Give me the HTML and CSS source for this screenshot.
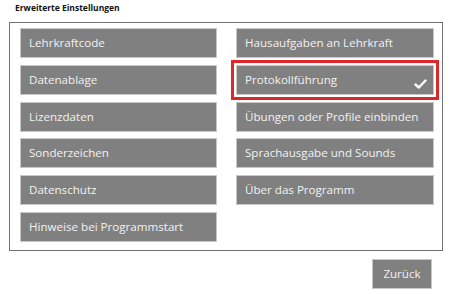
FILE: index.html
```html
<!DOCTYPE html>
<html lang="de">
<head>
    <meta charset="UTF-8">
    <title>Erweiterte Einstellungen</title>
    <link rel="stylesheet" href="styles.css">
</head>
<body>

<div class="settings-page">
    <h1 class="page-title">Erweiterte Einstellungen</h1>

    <div class="settings-panel">
        <button class="option-btn">Lehrkraftcode</button>
        <button class="option-btn">Hausaufgaben an Lehrkraft</button>
        <button class="option-btn">Datenablage</button>
        <button class="option-btn selected">Protokollführung
            <svg class="check" width="13" height="10" viewBox="0 0 13 10">
                <path d="M1.5 5.5 L4.8 8.5 L11.5 1.5" fill="none" stroke="#fff" stroke-width="2.4" stroke-linejoin="round" stroke-linecap="round"/>
            </svg>
        </button>
        <button class="option-btn">Lizenzdaten</button>
        <button class="option-btn">Übungen oder Profile einbinden</button>
        <button class="option-btn">Sonderzeichen</button>
        <button class="option-btn">Sprachausgabe und Sounds</button>
        <button class="option-btn">Datenschutz</button>
        <button class="option-btn">Über das Programm</button>
        <button class="option-btn">Hinweise bei Programmstart</button>
    </div>

    <div class="footer">
        <button class="back-btn">Zurück</button>
    </div>
</div>

</body>
</html>
```

FILE: styles.css
```css
body {
    margin: 0;
    background-color: #fff;
    font-family: "Open Sans", "Noto Sans", sans-serif;
}

.settings-page {
    width: 450px;
    height: 294px;
    padding: 0 7px 0 9px;
    box-sizing: border-box;
}

.page-title {
    font-size: 8.5px;
    font-weight: bold;
    color: #111;
    margin: 0;
    padding: 2px 0 0 6px;
    height: 20px;
    box-sizing: border-box;
}

/* Rahmen mit den Optionen */
.settings-panel {
    border: 1px solid #707070;
    display: grid;
    grid-template-columns: 197px 198px;
    column-gap: 19px;
    row-gap: 6.8px;
    padding: 5px 8px 8px 10px;
    margin-top: 2px;
    width: 434px;
    box-sizing: border-box;
}

.option-btn {
    position: relative;
    height: 30px;
    border: 1px solid #c8c8c8;
    background-color: #808080;
    color: #f2f2f2;
    font-family: inherit;
    font-size: 11.6px;
    text-align: left;
    padding: 0 0 1px 8px;
    cursor: pointer;
}

.option-btn.selected {
    outline: 3px solid #e0262b;
    outline-offset: 2px;
}

.check {
    position: absolute;
    right: 6px;
    top: 13px;
}

.footer {
    display: flex;
    justify-content: flex-end;
    padding: 8px 11px 0 0;
}

.back-btn {
    width: 60px;
    height: 30px;
    border: 1px solid #c8c8c8;
    background-color: #808080;
    color: #f2f2f2;
    font-family: inherit;
    font-size: 11.6px;
    padding: 0 0 1px;
    cursor: pointer;
}
```
